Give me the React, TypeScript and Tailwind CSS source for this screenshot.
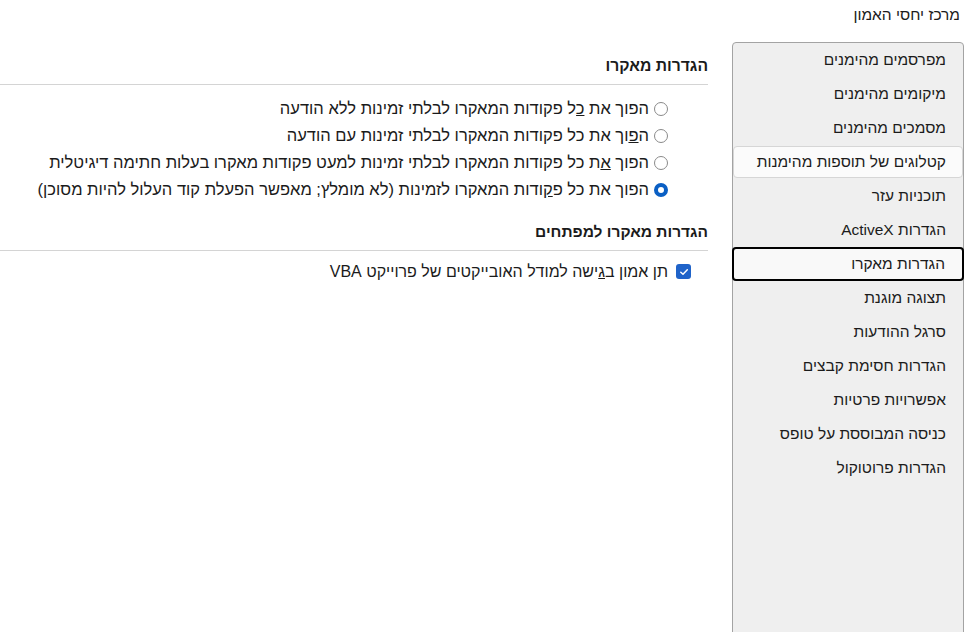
import React from "react";

const navItems = [
  "מפרסמים מהימנים",
  "מיקומים מהימנים",
  "מסמכים מהימנים",
  "קטלוגים של תוספות מהימנות",
  "תוכניות עזר",
  "הגדרות ActiveX",
  "הגדרות מאקרו",
  "תצוגה מוגנת",
  "סרגל ההודעות",
  "הגדרות חסימת קבצים",
  "אפשרויות פרטיות",
  "כניסה המבוססת על טופס",
  "הגדרות פרוטוקול",
];

function Radio({ checked }: { checked?: boolean }) {
  if (checked) {
    return <span className="inline-block w-[14px] h-[14px] rounded-full border-[4px] border-[#0a5fc4] bg-white shrink-0" />;
  }
  return <span className="inline-block w-[14px] h-[14px] rounded-full border border-[#8a8a8a] bg-white shrink-0" />;
}

function Checkbox() {
  return (
    <span className="inline-flex items-center justify-center w-[15px] h-[15px] rounded-[3px] bg-[#1f63c9] shrink-0">
      <svg width="10" height="10" viewBox="0 0 10 10" fill="none">
        <path d="M1.8 5.2 L4 7.2 L8.3 2.8" stroke="white" strokeWidth="1.5" strokeLinecap="round" strokeLinejoin="round" />
      </svg>
    </span>
  );
}

function Option({ children, checked }: { children: React.ReactNode; checked?: boolean }) {
  return (
    <label className="flex items-center gap-[5px] h-[27px]">
      <Radio checked={checked} />
      <span>{children}</span>
    </label>
  );
}

export default function App() {
  return (
    <div dir="rtl" className="w-[970px] h-[632px] bg-white overflow-hidden text-[#1b1b1b]" style={{ fontFamily: '"Liberation Sans", "DejaVu Sans", sans-serif' }}>
      <div className="h-[42px] pr-[10px] pt-[5px] text-[15.5px] leading-[20px]">מרכז יחסי האמון</div>

      <div className="flex h-[590px]">
        <nav className="w-[232px] mr-[6px] shrink-0 h-[600px] bg-[#efefef] border border-[#a3a3a3] rounded-t-[4px] text-[15.5px]">
          {navItems.map((item, i) => {
            if (i === 6) {
              return (
                <div key={item} className="h-[34px] -mx-px flex items-center pr-[17px] bg-[#f9f9f9] border-2 border-black rounded-[4px]">
                  {item}
                </div>
              );
            }
            if (i === 3) {
              return (
                <div key={item} className="h-[34px] flex items-center py-px">
                  <div className="h-full w-full flex items-center pr-[16px] bg-[#fbfbfb] border border-[#d6d6d6] rounded-[4px]">{item}</div>
                </div>
              );
            }
            return (
              <div key={item} className="h-[34px] flex items-center pr-[17px]">
                {item}
              </div>
            );
          })}
        </nav>

        <main className="flex-1 pl-0 pr-[24px] text-[16.5px]">
          <div className="pt-[14px] pb-[8px] font-bold leading-[20px] text-[15.7px]">הגדרות מאקרו</div>
          <div className="h-px bg-[#d4d4d4]" />
          <div className="pt-[10px] pr-[40px]">
            <Option>
              הפוך את <u>כ</u>ל פקודות המאקרו לבלתי זמינות ללא הודעה
            </Option>
            <Option>
              ה<u>פ</u>וך את כל פקודות המאקרו לבלתי זמינות עם הודעה
            </Option>
            <Option>
              הפוך <u>א</u>ת כל פקודות המאקרו לבלתי זמינות למעט פקודות מאקרו בעלות חתימה דיגיטלית
            </Option>
            <Option checked>
              הפוך את כל פ<u>ק</u>ודות המאקרו לזמינות (לא מומלץ; מאפשר הפעלת קוד העלול להיות מסוכן)
            </Option>
          </div>

          <div className="pt-[19px] pb-[8px] font-bold leading-[20px] text-[15.5px]">הגדרות מאקרו למפתחים</div>
          <div className="h-px bg-[#d4d4d4]" />
          <label className="flex items-center gap-[8px] pr-[17px] h-[27px] mt-[7px] text-[16px]">
            <Checkbox />
            <span>
              תן אמון ב<u>ג</u>ישה למודל האובייקטים של פרוייקט VBA
            </span>
          </label>
        </main>
      </div>
    </div>
  );
}
